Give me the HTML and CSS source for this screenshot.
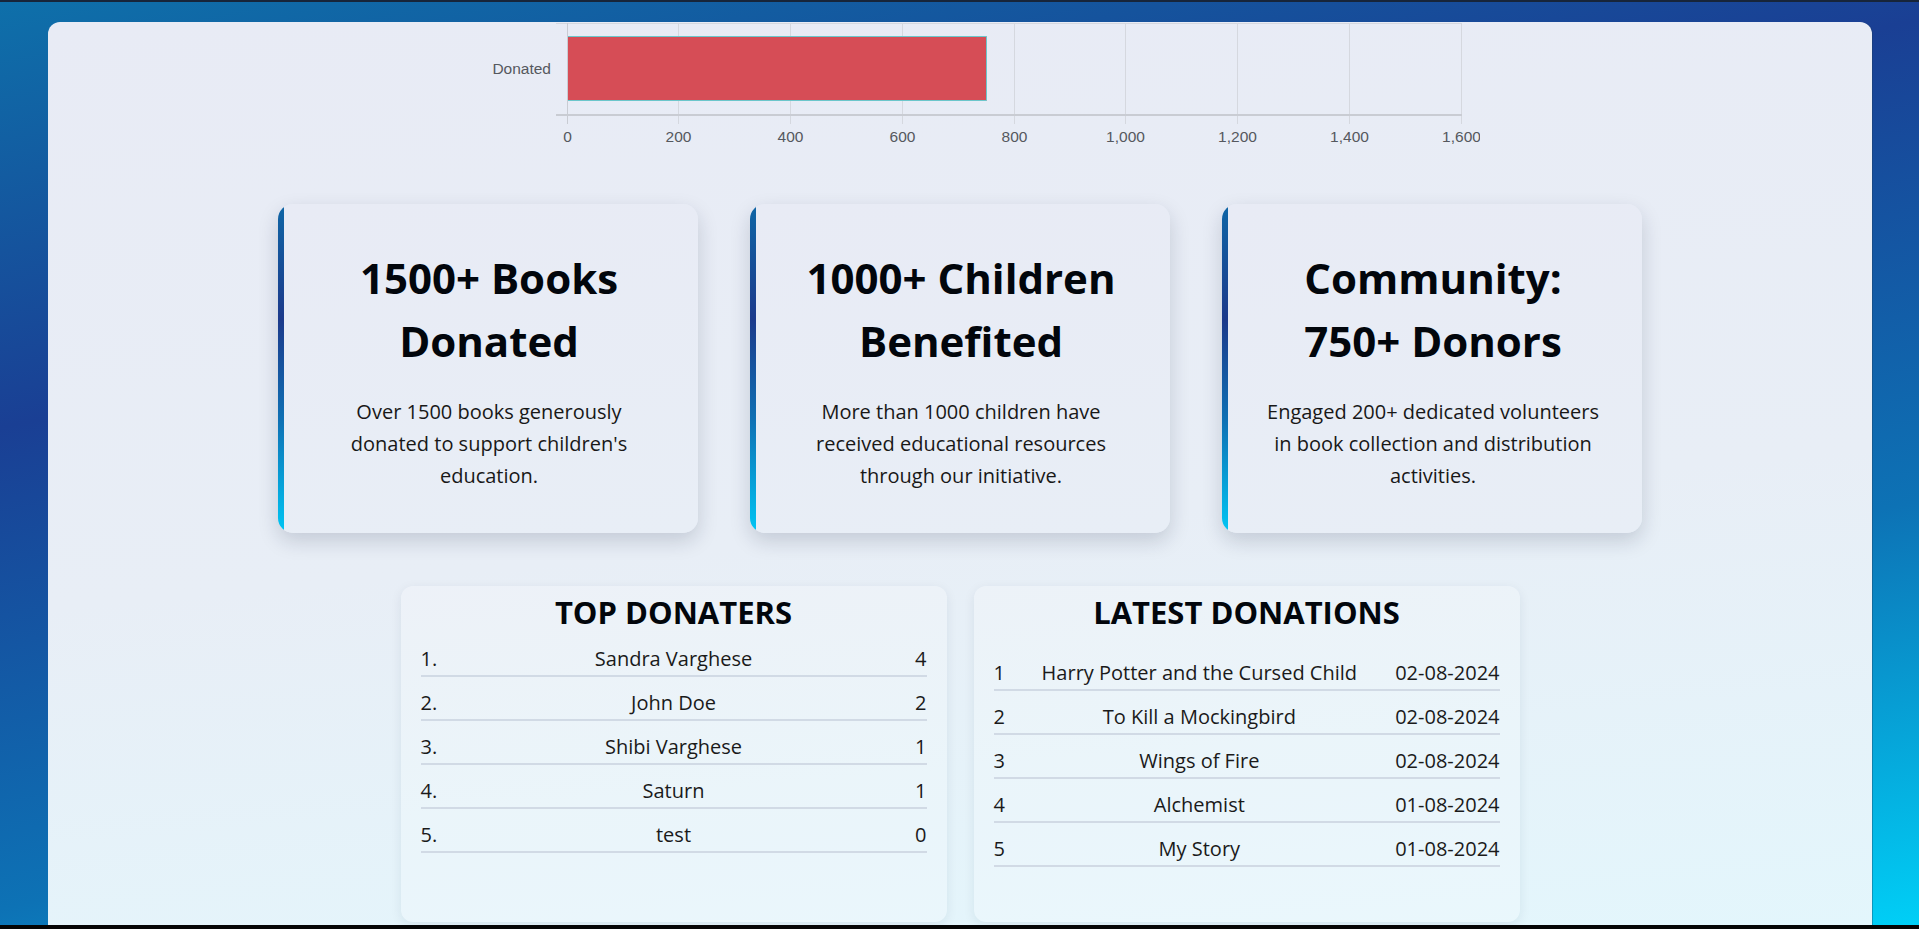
FILE: index.html
```html
<!DOCTYPE html>
<html lang="en">
<head>
<meta charset="utf-8">
<title>Book Donation Dashboard</title>
<link rel="stylesheet" href="styles.css">
</head>
<body>
<div class="page">
  <main class="panel">
    <section class="chart">
      <svg class="chart-svg" width="1040" height="130" viewBox="0 0 1040 130">
        <g class="grid">
          <line x1="238.5" y1="1" x2="238.5" y2="102"/>
          <line x1="350.5" y1="1" x2="350.5" y2="102"/>
          <line x1="462.5" y1="1" x2="462.5" y2="102"/>
          <line x1="574.5" y1="1" x2="574.5" y2="102"/>
          <line x1="685.5" y1="1" x2="685.5" y2="102"/>
          <line x1="797.5" y1="1" x2="797.5" y2="102"/>
          <line x1="909.5" y1="1" x2="909.5" y2="102"/>
          <line x1="1021.5" y1="1" x2="1021.5" y2="102"/>
          <line x1="116" y1="1.5" x2="1022" y2="1.5"/>
        </g>
        <rect class="bar" x="127.5" y="14" width="419" height="65"/>
        <path class="bar-edge" d="M127.5 14.5 H546.5 V78.5 H127.5"/>
        <line class="axis" x1="127.5" y1="1" x2="127.5" y2="102"/>
        <line class="axis axis-x" x1="116" y1="93" x2="1022" y2="93"/>
        <text class="tick" x="111" y="51.5" text-anchor="end">Donated</text>
        <g class="tick" text-anchor="middle">
          <text x="127.5" y="120">0</text>
          <text x="238.5" y="120">200</text>
          <text x="350.5" y="120">400</text>
          <text x="462.5" y="120">600</text>
          <text x="574.5" y="120">800</text>
          <text x="685.5" y="120">1,000</text>
          <text x="797.5" y="120">1,200</text>
          <text x="909.5" y="120">1,400</text>
          <text x="1021.5" y="120">1,600</text>
        </g>
      </svg>
    </section>

    <section class="stats">
      <article class="stat">
        <h2 class="stat-title">1500+ Books Donated</h2>
        <p class="stat-text">Over 1500 books generously donated to support children's education.</p>
      </article>
      <article class="stat">
        <h2 class="stat-title">1000+ Children Benefited</h2>
        <p class="stat-text">More than 1000 children have received educational resources through our initiative.</p>
      </article>
      <article class="stat">
        <h2 class="stat-title">Community: 750+ Donors</h2>
        <p class="stat-text">Engaged 200+ dedicated volunteers in book collection and distribution activities.</p>
      </article>
    </section>

    <section class="boards">
      <div class="board">
        <h2 class="board-title">TOP DONATERS</h2>
        <ol class="rows">
          <li class="row rank"><span>1.</span><span class="mid">Sandra Varghese</span><span class="end">4</span></li>
          <li class="row rank"><span>2.</span><span class="mid">John Doe</span><span class="end">2</span></li>
          <li class="row rank"><span>3.</span><span class="mid">Shibi Varghese</span><span class="end">1</span></li>
          <li class="row rank"><span>4.</span><span class="mid">Saturn</span><span class="end">1</span></li>
          <li class="row rank"><span>5.</span><span class="mid">test</span><span class="end">0</span></li>
        </ol>
      </div>
      <div class="board">
        <h2 class="board-title">LATEST DONATIONS</h2>
        <ol class="rows rows-latest">
          <li class="row latest"><span>1</span><span class="mid">Harry Potter and the Cursed Child</span><span class="end date">02-08-2024</span></li>
          <li class="row latest"><span>2</span><span class="mid">To Kill a Mockingbird</span><span class="end date">02-08-2024</span></li>
          <li class="row latest"><span>3</span><span class="mid">Wings of Fire</span><span class="end date">02-08-2024</span></li>
          <li class="row latest"><span>4</span><span class="mid">Alchemist</span><span class="end date">01-08-2024</span></li>
          <li class="row latest"><span>5</span><span class="mid">My Story</span><span class="end date">01-08-2024</span></li>
        </ol>
      </div>
    </section>
  </main>
</div>
<div class="screen-edge"></div>
</body>
</html>
```

FILE: styles.css
```css
html, body {
  margin: 0;
  padding: 0;
  height: 100%;
}

body {
  overflow: hidden;
  font-family: "Open Sans", "Noto Sans", sans-serif;
  color: #1e1e1e;
  background: linear-gradient(168deg, #0e70aa 0%, #1a3f94 32%, #0d72b5 68%, #00d0f7 100%);
  border-top: 2px solid #17253a;
  box-sizing: border-box;
}

.page {
  padding: 20px 47px 0 48px;
}

.panel {
  height: 907px;
  box-sizing: border-box;
  border-radius: 12px 12px 0 0;
  background: linear-gradient(175deg, #e8ebf5 0%, #e8eef6 55%, #e3f6fc 100%);
  box-shadow: 1px 0 0 rgba(30, 60, 90, 0.35);
}

/* chart */
.chart {
  display: flex;
  justify-content: center;
  height: 130px;
}

.chart-svg {
  display: block;
}

.grid line {
  stroke: #d5d8df;
  stroke-width: 1;
}

.axis {
  stroke: #c9ccd3;
  stroke-width: 1;
}

.axis-x {
  stroke-width: 2;
}

.bar {
  fill: #d64d56;
}

.bar-edge {
  fill: none;
  stroke: #6cc6cb;
  stroke-width: 1;
}

.tick {
  font-family: "Liberation Sans", Arial, sans-serif;
  font-size: 15.5px;
  fill: #55585e;
}

/* stat cards */
.stats {
  display: flex;
  justify-content: center;
  gap: 52px;
  margin-top: 52px;
}

.stat {
  width: 420px;
  box-sizing: border-box;
  padding: 42px 38px 41px 40px;
  border-radius: 15px;
  background:
    linear-gradient(to bottom, #0f66a6 0%, #1c3a8b 35%, #0f6fb3 65%, #00c6f4 100%) left top / 6px 100% no-repeat,
    linear-gradient(175deg, #e8ebf5 0%, #e8eef6 100%);
  box-shadow: 0 8px 20px rgba(20, 30, 60, 0.17);
  text-align: center;
}

.stat-title {
  margin: 0 0 24px;
  font-size: 42px;
  line-height: 63px;
  font-weight: 700;
  color: #02060c;
}

.stat-text {
  margin: 0;
  font-size: 20px;
  line-height: 32px;
  color: #181818;
}

/* boards */
.boards {
  display: flex;
  justify-content: center;
  gap: 27px;
  margin-top: 53px;
}

.board {
  width: 546px;
  height: 336px;
  box-sizing: border-box;
  padding: 5px 20px 0;
  border-radius: 12px;
  background: rgba(255, 255, 255, 0.22);
  box-shadow: 0 3px 12px rgba(20, 40, 70, 0.08);
}

.board-title {
  margin: 0;
  text-align: center;
  font-size: 31px;
  line-height: normal;
  font-weight: 700;
  color: #02060c;
}

.rows {
  list-style: none;
  margin: 0;
  padding: 0;
}

.rows-latest {
  margin-top: 14px;
}

.row {
  display: grid;
  padding: 13px 0 3px;
  font-size: 20px;
  line-height: 26px;
  border-bottom: 2px solid #d1dae5;
  color: #1a1a1a;
}

.rank {
  grid-template-columns: 1fr auto 1fr;
}

.latest {
  grid-template-columns: 30px 1fr auto;
}

.mid {
  text-align: center;
  white-space: nowrap;
}

.end {
  text-align: right;
}

.date {
  padding-left: 20px;
}

.screen-edge {
  position: fixed;
  left: 0;
  right: 0;
  bottom: 0;
  height: 4px;
  background: #050505;
}
```
